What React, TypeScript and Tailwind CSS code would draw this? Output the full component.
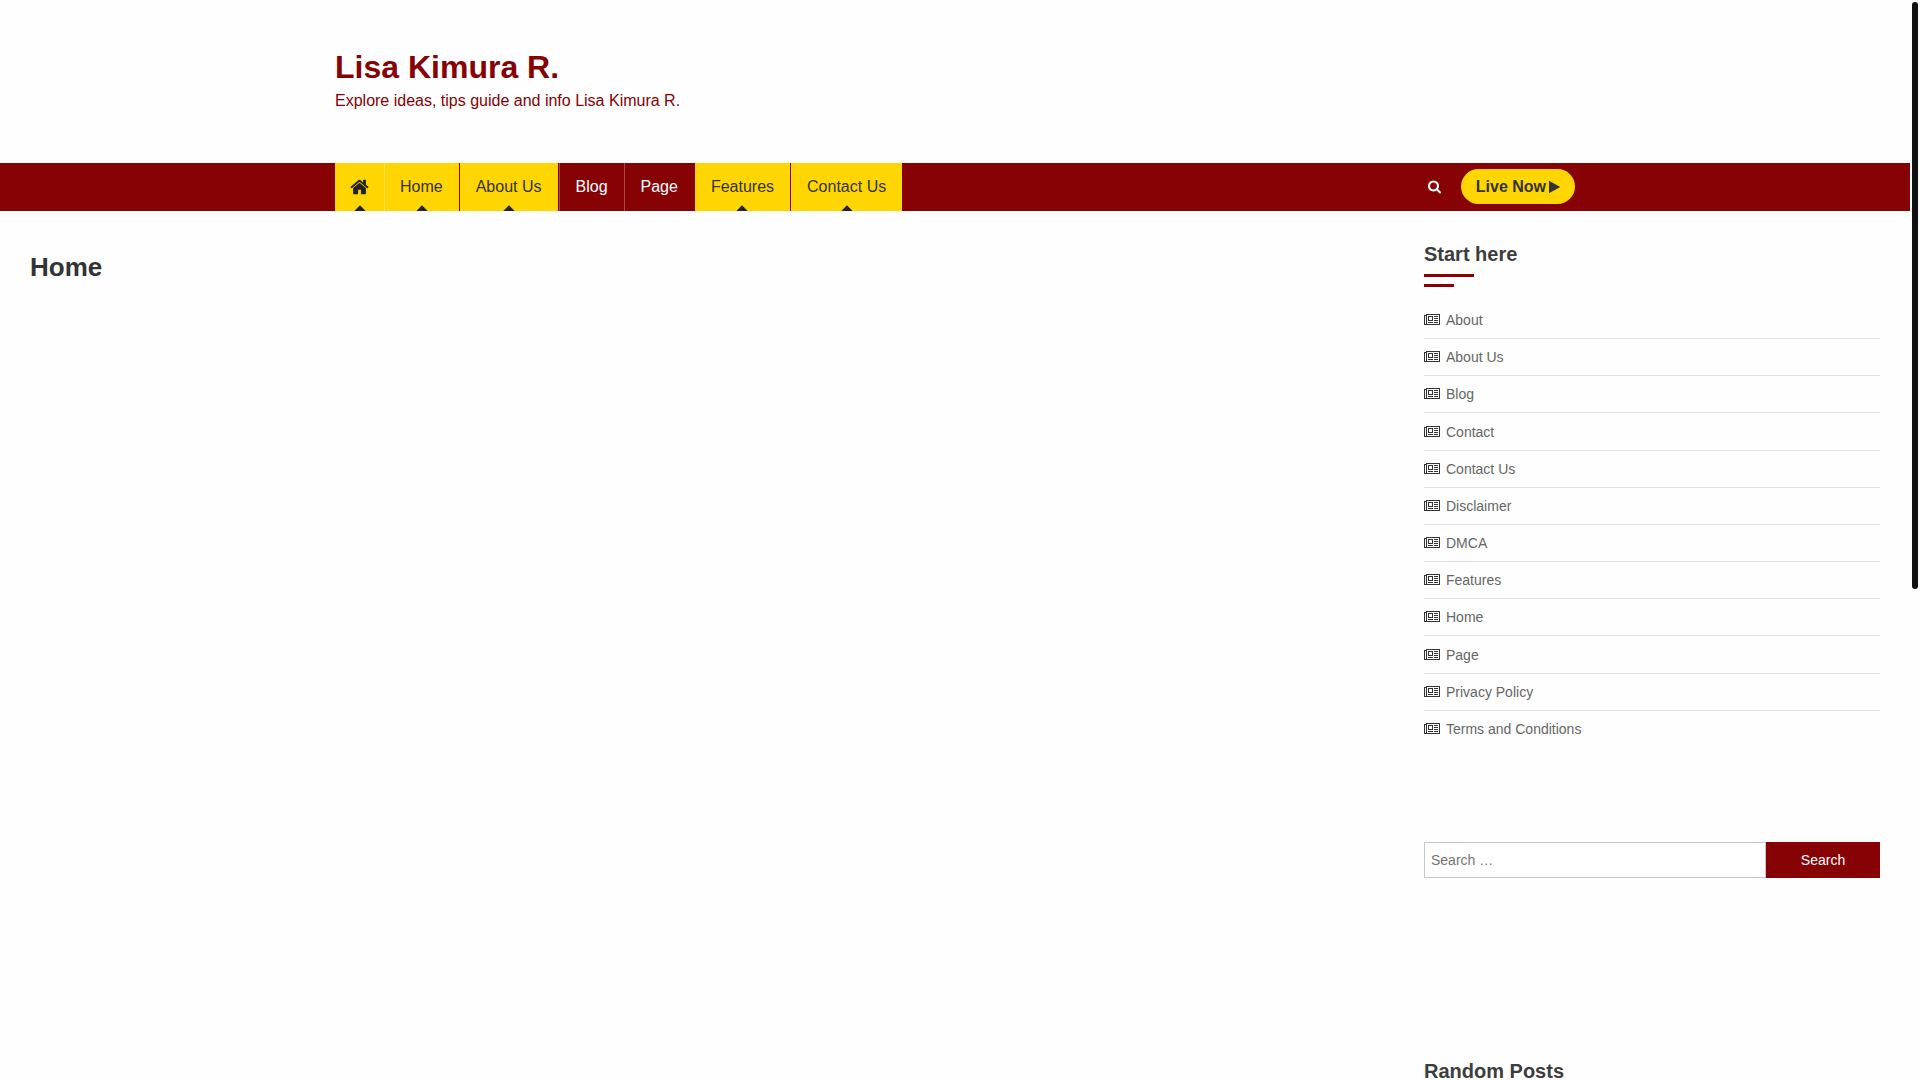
import clsx from "clsx";

interface MenuItem {
  label: string;
  active: boolean;
  border: string;
  padding: string;
}

const menu: MenuItem[] = [
  { label: "Home", active: true, border: "border-r border-[#860204]", padding: "pr-4 pl-[15px]" },
  { label: "About Us", active: true, border: "border-r border-[#860204]", padding: "px-4" },
  { label: "Blog", active: false, border: "border-x border-[#a4474a]", padding: "px-4" },
  { label: "Page", active: false, border: "border-r border-[#860204]", padding: "px-4" },
  { label: "Features", active: true, border: "border-r border-[#860204]", padding: "px-4" },
  { label: "Contact Us", active: true, border: "border-r border-[#860204]", padding: "px-4" },
];

const pages = [
  "About",
  "About Us",
  "Blog",
  "Contact",
  "Contact Us",
  "Disclaimer",
  "DMCA",
  "Features",
  "Home",
  "Page",
  "Privacy Policy",
  "Terms and Conditions",
];

function HomeIcon() {
  return (
    <svg className="h-5 w-[19px]" viewBox="64 0 1664 1792" fill="currentColor" aria-hidden="true">
      <path d="M1472 992v480q0 26-19 45t-45 19h-384v-384h-256v384h-384q-26 0-45-19t-19-45v-480q0-1 .5-3t.5-3l575-474 575 474q1 2 1 6zm223-69l-62 74q-8 9-21 11h-3q-13 0-21-7l-692-577-692 577q-12 8-24 7-13-2-21-11l-62-74q-8-10-7-23.5t11-21.5l719-599q32-26 76-26t76 26l244 204v-195q0-14 9-23t23-9h192q14 0 23 9t9 23v408l219 182q10 8 11 21.5t-7 23.5z" />
    </svg>
  );
}

function SearchIcon() {
  return (
    <svg className="h-[14px] w-[13px]" viewBox="64 128 1664 1664" fill="currentColor" aria-hidden="true">
      <path d="M1216 832q0-185-131.5-316.5t-316.5-131.5-316.5 131.5-131.5 316.5 131.5 316.5 316.5 131.5 316.5-131.5 131.5-316.5zm512 832q0 52-38 90t-90 38q-54 0-90-38l-343-342q-179 124-399 124-143 0-273.5-55.5t-225-150-150-225-55.5-273.5 55.5-273.5 150-225 225-150 273.5-55.5 273.5 55.5 225 150 150 225 55.5 273.5q0 220-124 399l343 343q37 37 37 90z" />
    </svg>
  );
}

function PlayIcon() {
  return (
    <svg className="h-[14px] w-[11px]" viewBox="192 0 1408 1792" fill="currentColor" aria-hidden="true">
      <path d="M1576 927l-1328 738q-23 13-39.5 3t-16.5-36v-1472q0-26 16.5-36t39.5 3l1328 738q23 13 23 31t-23 31z" />
    </svg>
  );
}

function NewspaperIcon() {
  return (
    <svg
      className="h-[14px] w-4 text-[#333]"
      viewBox="0 0 2048 1792"
      fill="currentColor"
      shapeRendering="crispEdges"
      aria-hidden="true"
    >
      <path d="M1024 512h-384v384h384v-384zm128 640v128h-640v-128h640zm0-768v640h-640v-640h640zm640 768v128h-512v-128h512zm0-256v128h-512v-128h512zm0-256v128h-512v-128h512zm0-256v128h-512v-128h512zm-1536 960v-960h-128v960q0 26 19 45t45 19 45-19 19-45zm1664 0v-1088h-1536v1088q0 33-11 64h1483q26 0 45-19t19-45zm128-1216v1216q0 80-56 136t-136 56h-1664q-80 0-136-56t-56-136v-1088h256v-128h1792z" />
    </svg>
  );
}

// Small diamond cut off by the bottom edge of the menu item
function Marker() {
  return <span className="absolute -bottom-1 left-1/2 size-2 -translate-x-1/2 rotate-45 bg-[#222]" />;
}

function WidgetTitle({ children }: { children: string }) {
  return (
    <div>
      <h2 className="text-xl leading-6 font-bold text-[#3d3d3d]">{children}</h2>
      <div className="mt-2 h-[3px] w-[50px] bg-[#860204]" />
      <div className="mt-[7px] h-[3px] w-[30px] bg-[#860204]" />
    </div>
  );
}

export default function App() {
  return (
    <div className="flex h-screen overflow-hidden bg-[#fefefe] font-['Liberation_Sans',Arial,sans-serif] text-base text-[#333]">
      <div className="min-w-0 flex-1">
        <header>
          <div className="mx-auto max-w-[1240px] pt-[46px] pb-[50px] text-[#860204]">
            <h1 className="text-[32px] leading-[42px] font-bold">
              <a href="#">Lisa Kimura R.</a>
            </h1>
            <p className="mt-px leading-6">Explore ideas, tips guide and info Lisa Kimura R.</p>
          </div>

          <nav className="bg-[#860204]">
            <div className="mx-auto flex h-12 max-w-[1240px] items-center justify-between">
              <ul className="flex h-full">
                <li className="border-r border-[#ffe04d]">
                  <a
                    href="#"
                    aria-label="Home page"
                    className="relative flex h-full items-center overflow-hidden bg-[#ffd602] px-[15px] text-[#222]"
                  >
                    <HomeIcon />
                    <Marker />
                  </a>
                </li>
                {menu.map((item) => (
                  <li key={item.label} className={item.border}>
                    <a
                      href="#"
                      className={clsx(
                        "relative flex h-full items-center overflow-hidden",
                        item.padding,
                        item.active ? "bg-[#ffd602] text-[#333]" : "text-white"
                      )}
                    >
                      {item.label}
                      {item.active && <Marker />}
                    </a>
                  </li>
                ))}
              </ul>

              <div className="flex items-center gap-5">
                <button type="button" aria-label="Open search" className="text-white">
                  <SearchIcon />
                </button>
                <a
                  href="#"
                  className="mb-px flex h-[35px] items-center gap-[3px] rounded-full bg-[#ffd602] px-[15px] font-bold text-[#333]"
                >
                  Live Now
                  <PlayIcon />
                </a>
              </div>
            </div>
          </nav>
        </header>

        <div className="flex justify-between gap-10 px-[30px]">
          <main className="min-w-0 flex-1 pt-10">
            <h2 className="text-[26px] leading-8 font-bold">Home</h2>
          </main>

          <aside className="w-[456px] shrink-0 pt-[31px]">
            <section>
              <WidgetTitle>Start here</WidgetTitle>
              <ul className="mt-[15px] grid min-h-[446px] text-sm text-[#666]">
                {pages.map((page) => (
                  <li key={page} className="flex items-center border-b border-[#e1e1e1] last:border-transparent">
                    <a href="#" className="flex items-center gap-[6px]">
                      <NewspaperIcon />
                      {page}
                    </a>
                  </li>
                ))}
              </ul>
            </section>

            <form className="mt-[94px] flex h-9 text-sm" onSubmit={(e) => e.preventDefault()}>
              <input
                type="search"
                aria-label="Search for"
                placeholder="Search …"
                className="w-3/4 border border-[#c8c8c8] bg-white px-[6px] placeholder:text-[#757575]"
              />
              <button type="submit" className="w-1/4 bg-[#860204] text-white">
                Search
              </button>
            </form>

            <section className="mt-[181px]">
              <WidgetTitle>Random Posts</WidgetTitle>
            </section>
          </aside>
        </div>
      </div>

      <div className="w-[10px] shrink-0 p-0.5">
        <div className="h-[587px] rounded-full bg-[#111]" />
      </div>
    </div>
  );
}
